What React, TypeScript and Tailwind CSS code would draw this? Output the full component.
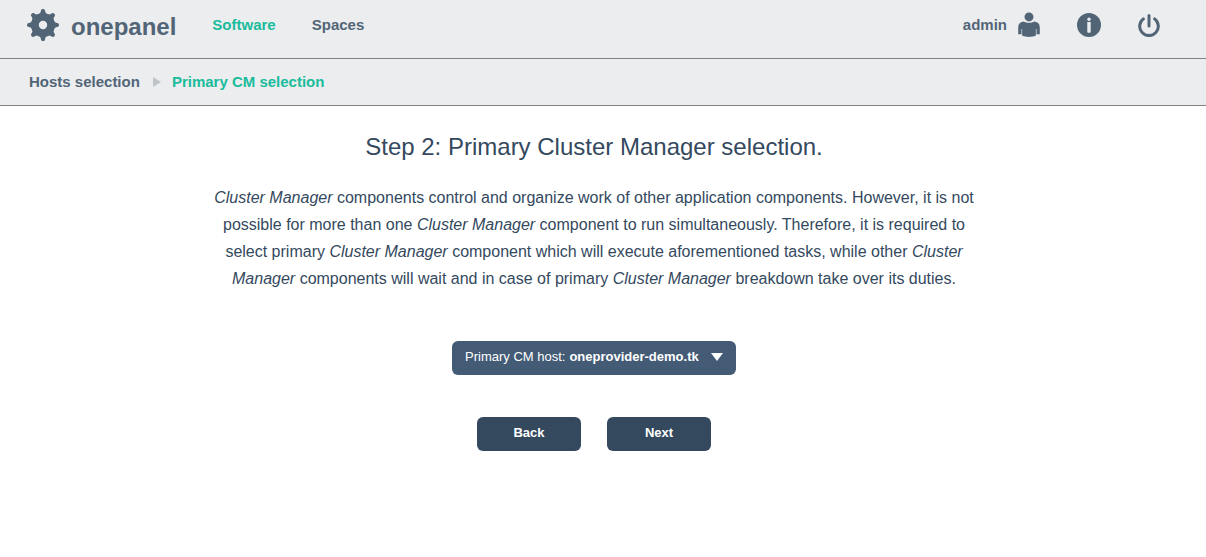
import { useState } from "react";

const teeth = [0, 45, 90, 135, 180, 225, 270, 315];

function GearIcon() {
  return (
    <svg viewBox="-16 -16 32 32" className="size-8" fill="currentColor" aria-hidden="true">
      <path
        fillRule="evenodd"
        d="M0-12A12 12 0 1 1 0 12A12 12 0 1 1 0-12ZM0-4.2A4.2 4.2 0 1 0 0 4.2A4.2 4.2 0 1 0 0-4.2Z"
      />
      {teeth.map((angle) => (
        <path
          key={angle}
          transform={`rotate(${angle})`}
          d="M-4.8-10.6C-2.8-11.5-2.3-12.6-2.1-14.2C-1.9-15.5-1-16 0-16C1-16 1.9-15.5 2.1-14.2C2.3-12.6 2.8-11.5 4.8-10.6Z"
        />
      ))}
    </svg>
  );
}

function PersonIcon() {
  return (
    <svg viewBox="0 0 22 26" className="h-[26px] w-[22px]" fill="currentColor" aria-hidden="true">
      <circle cx="11" cy="4.9" r="4.5" />
      <path d="M5.4 9.5C7.2 10.5 9 10.8 11 10.8S14.8 10.5 16.6 9.5C19.8 10 21.8 12 21.8 15.4V22.2H18.5V17H17.9V23.6C15.8 24.6 13.4 25 11 25S6.2 24.6 4.1 23.6V17H3.5V22.2H.2V15.4C.2 12 2.2 10 5.4 9.5Z" />
    </svg>
  );
}

function InfoIcon() {
  return (
    <svg viewBox="0 0 24 24" className="size-6" aria-hidden="true">
      <circle cx="12" cy="12" r="12" fill="currentColor" />
      <circle cx="12" cy="6.2" r="1.7" fill="#ebedef" />
      <path d="M10.3 9H13.7V18.8Q13.7 19.8 12.7 19.8H11.3Q10.3 19.8 10.3 18.8Z" fill="#ebedef" />
    </svg>
  );
}

function PowerIcon() {
  return (
    <svg
      viewBox="0 0 22 24"
      className="h-6 w-[22px]"
      fill="none"
      stroke="currentColor"
      strokeWidth="3"
      strokeLinecap="round"
      aria-hidden="true"
    >
      <path d="M11 2.5V13" />
      <path d="M5.4 5.9A9.3 9.3 0 1 0 16.6 5.9" />
    </svg>
  );
}

const hosts = ["oneprovider-demo.tk"];

export default function App() {
  const [host, setHost] = useState(hosts[0]);

  return (
    <div className="min-h-screen bg-white font-['Liberation_Sans',Arial,sans-serif] text-[#34495e]">
      <header className="flex h-[59px] items-start border-b border-[#7f8387] bg-[#ebedef] pr-[46px] pl-[27px] text-[#526577]">
        <a href="#home" className="flex items-start gap-3 pt-[9px]">
          <GearIcon />
          <span className="text-2xl leading-9 font-bold">onepanel</span>
        </a>
        <nav className="ml-9 flex gap-9 pt-3 text-[15px] leading-[26px] font-bold">
          <a href="#software" className="text-[#1abc9c]" aria-current="page">
            Software
          </a>
          <a href="#spaces">Spaces</a>
        </nav>
        <div className="ml-auto flex items-center gap-[37px] pt-3">
          <a href="#account" className="flex items-center gap-[11px] text-[15px] leading-[26px] font-bold">
            admin
            <PersonIcon />
          </a>
          <button type="button" aria-label="About">
            <InfoIcon />
          </button>
          <button type="button" aria-label="Log out">
            <PowerIcon />
          </button>
        </div>
      </header>

      <nav
        aria-label="Breadcrumb"
        className="flex h-[47px] items-center border-b border-[#7f8387] bg-[#ebedef] px-[29px] text-[15px] font-bold text-[#526577]"
      >
        <a href="#hosts">Hosts selection</a>
        <svg viewBox="0 0 8 10" className="mr-[11px] ml-[13px] h-[10px] w-2" aria-hidden="true">
          <path d="M0 0L8 5L0 10Z" fill="#bfc4c8" />
        </svg>
        <a href="#primary" className="text-[#1abc9c]" aria-current="step">
          Primary CM selection
        </a>
      </nav>

      <main className="flex flex-col items-center pt-[25px] pr-[18px] text-center">
        <h1 className="text-2xl leading-8">Step 2: Primary Cluster Manager selection.</h1>
        <p className="mt-[21px] max-w-[768px] text-base leading-[27px]">
          <em>Cluster Manager</em> components control and organize work of other application
          components. However, it is not possible for more than one <em>Cluster Manager</em>{" "}
          component to run simultaneously. Therefore, it is required to select primary{" "}
          <em>Cluster Manager</em> component which will execute aforementioned tasks, while other{" "}
          <em>Cluster Manager</em> components will wait and in case of primary{" "}
          <em>Cluster Manager</em> breakdown take over its duties.
        </p>

        <div className="mt-[49px] grid h-[34px] w-[284px] items-center rounded-md bg-[#435b75] text-[13px] text-white">
          <div className="flex items-center px-[13px] pb-[2px]">
            <label htmlFor="host" className="whitespace-nowrap">
              Primary CM host:
            </label>
            <select
              id="host"
              value={host}
              onChange={(event) => setHost(event.target.value)}
              className="ml-1 min-w-0 flex-1 appearance-none bg-transparent font-bold outline-none"
            >
              {hosts.map((name) => (
                <option key={name}>{name}</option>
              ))}
            </select>
            <svg viewBox="0 0 12 8" className="h-2 w-3" aria-hidden="true">
              <path d="M0 0H12L6 8Z" fill="white" />
            </svg>
          </div>
        </div>

        <div className="mt-[42px] flex gap-[26px] text-[13px] font-bold text-white">
          <button type="button" className="h-[34px] w-[104px] rounded-md bg-[#34495e] pb-[2px]">
            Back
          </button>
          <button type="button" className="h-[34px] w-[104px] rounded-md bg-[#34495e] pb-[2px]">
            Next
          </button>
        </div>
      </main>
    </div>
  );
}
